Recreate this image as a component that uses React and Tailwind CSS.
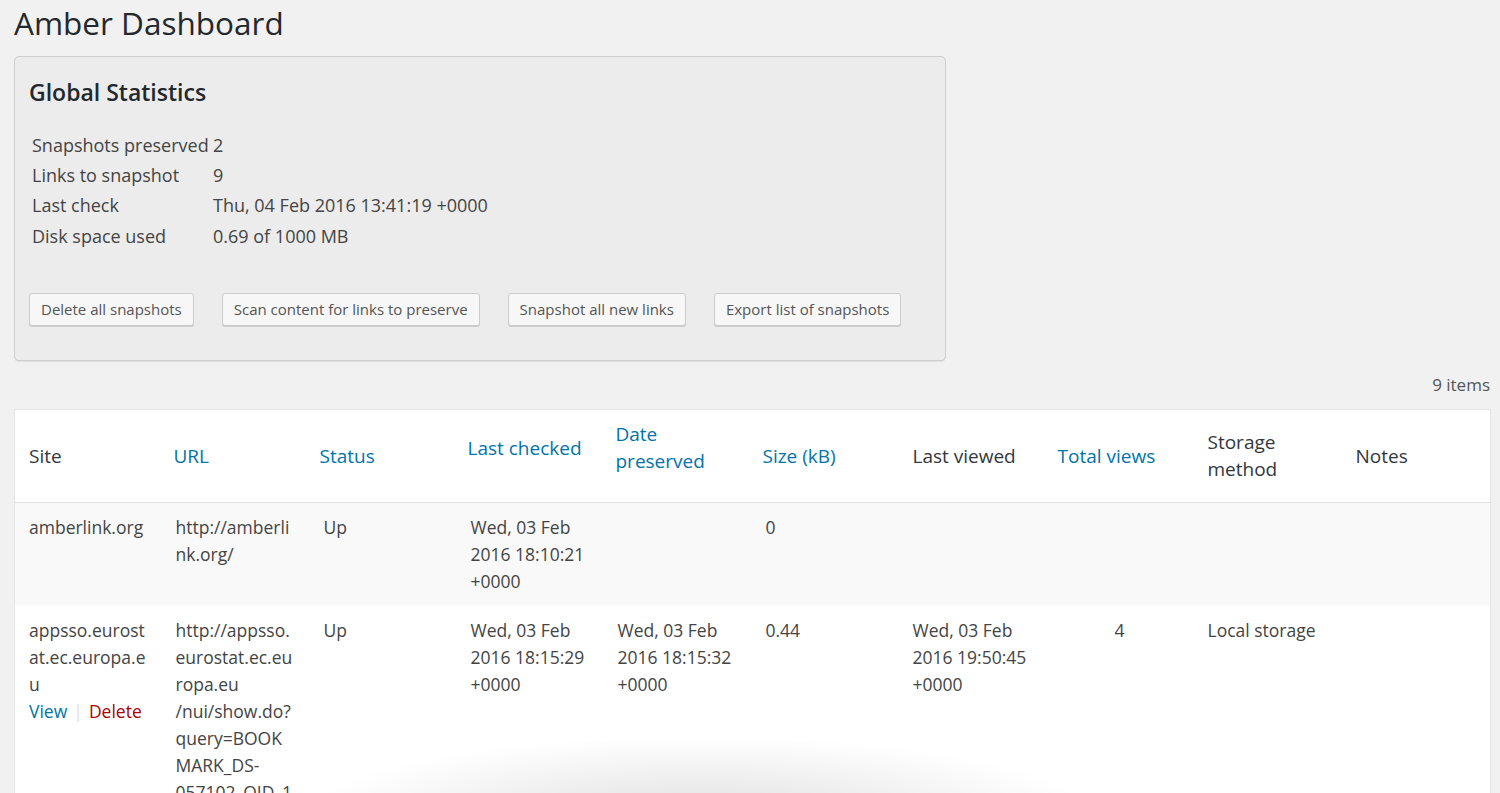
import React from 'react';

const stats = [
  ['Snapshots preserved', '2'],
  ['Links to snapshot', '9'],
  ['Last check', 'Thu, 04 Feb 2016 13:41:19 +0000'],
  ['Disk space used', '0.69 of 1000 MB'],
];

const buttons = [
  'Delete all snapshots',
  'Scan content for links to preserve',
  'Snapshot all new links',
  'Export list of snapshots',
];

const columns = [
  { label: 'Site', w: 'w-[145px]' },
  { label: 'URL', sortable: true, w: 'w-[146px]' },
  { label: 'Status', sortable: true, w: 'w-[148px]' },
  { label: 'Last checked', sortable: true, indicator: true, w: 'w-[148px]' },
  { label: 'Date preserved', sortable: true, indicator: true, w: 'w-[147px]' },
  { label: 'Size (kB)', sortable: true, w: 'w-[150px]' },
  { label: 'Last viewed', w: 'w-[145px]' },
  { label: 'Total views', sortable: true, w: 'w-[150px]' },
  { label: 'Storage method', w: 'w-[148px]' },
  { label: 'Notes', w: 'w-[149px]' },
];

function Cell({ children, className = 'pl-[14px]' }) {
  return <td className={`align-top pt-[11px] pb-[11px] pr-[12px] ${className}`}>{children}</td>;
}

export default function App() {
  return (
    <div
      className="min-h-screen bg-[#f1f1f1] text-[#444] relative overflow-hidden"
      style={{ fontFamily: '"Open Sans", "Liberation Sans", sans-serif' }}
    >
      <div className="pl-[14px] pr-[10px]">
        <h1 className="text-[31.5px] leading-[40px] pt-[3px] text-[#23282d] font-normal">Amber Dashboard</h1>

        <div className="mt-[13px] w-[932px] bg-[#ececec] border border-[#cfcfcf] rounded-[5px] shadow-[0_1px_1px_rgba(0,0,0,0.08)] pl-[14px] pt-[20px] pb-[34px]">
          <h2 className="text-[23px] leading-[31px] font-semibold text-[#23282d]">Global Statistics</h2>
          <table className="mt-[22px] ml-[3px] text-[18px] text-[#444]">
            <tbody>
              {stats.map(([k, v]) => (
                <tr key={k} className="h-[30.3px]">
                  <td className="w-[181px] align-middle">{k}</td>
                  <td className="align-middle">{v}</td>
                </tr>
              ))}
            </tbody>
          </table>
          <div className="mt-[42px] flex gap-[28px]">
            {buttons.map((b) => (
              <button
                key={b}
                className="h-[33px] px-[11px] text-[15px] text-[#555] bg-[#f7f7f7] border border-[#cccccc] rounded-[3px] shadow-[0_1px_0_#cccccc]"
              >
                {b}
              </button>
            ))}
          </div>
        </div>

        <div className="text-right text-[17px] leading-[24px] mt-[12px] text-[#555]">9 items</div>

        <table className="mt-[12px] w-[1476px] table-fixed bg-white border border-[#e5e5e5] shadow-[0_1px_1px_rgba(0,0,0,0.04)] text-[17.5px] leading-[27px] border-collapse">
          <colgroup>
            {columns.map((c) => (
              <col key={c.label} className={c.w} />
            ))}
          </colgroup>
          <thead>
            <tr className="border-b border-[#e1e1e1]">
              {columns.map((c) => (
                <th
                  key={c.label}
                  className={`text-left font-normal align-middle py-[11px] pl-[14px] pr-[12px] text-[19px] leading-[27px] ${
                    c.sortable ? 'text-[#0073aa]' : 'text-[#32373c]'
                  }`}
                >
                  <span className="block">{c.label}</span>
                  {c.indicator && <span className="block h-[16px]"></span>}
                </th>
              ))}
            </tr>
          </thead>
          <tbody>
            <tr className="bg-[#f9f9f9]">
              <Cell className="pl-[14px] break-words">amberlink.org</Cell>
              <Cell className="pl-[16px] break-words">http://amberlink.org/</Cell>
              <Cell className="pl-[18px]">Up</Cell>
              <Cell className="pl-[17px]">Wed, 03 Feb 2016 18:10:21 +0000</Cell>
              <Cell></Cell>
              <Cell className="pl-[17px]">0</Cell>
              <Cell></Cell>
              <Cell></Cell>
              <Cell></Cell>
              <Cell></Cell>
            </tr>
            <tr className="bg-white">
              <Cell className="pl-[14px] break-words">
                appsso.eurostat.ec.europa.eu
                <div>
                  <a className="text-[#0073aa]">View</a>
                  <span className="text-[#ddd] mx-[6px]">|</span>
                  <a className="text-[#a00]">Delete</a>
                </div>
              </Cell>
              <Cell className="pl-[16px] break-words">
                http://appsso.eurostat.ec.europa.eu<wbr />/nui/show.do?<wbr />query=BOOKMARK_DS-<wbr />057102_QID_1DC3D4A5_UID_-3F171EB0&amp;layout=TIME,C,X,0;GEO,L,Y,0
              </Cell>
              <Cell className="pl-[18px]">Up</Cell>
              <Cell className="pl-[17px]">Wed, 03 Feb 2016 18:15:29 +0000</Cell>
              <Cell className="pl-[16px]">Wed, 03 Feb 2016 18:15:32 +0000</Cell>
              <Cell className="pl-[17px]">0.44</Cell>
              <Cell>Wed, 03 Feb 2016 19:50:45 +0000</Cell>
              <Cell className="pl-[14px] text-center">4</Cell>
              <Cell>Local storage</Cell>
              <Cell></Cell>
            </tr>
          </tbody>
        </table>
      </div>

      <div className="pointer-events-none absolute left-[250px] top-[725px] w-[900px] h-[180px] bg-[radial-gradient(ellipse_at_center,rgba(0,0,0,0.12),rgba(0,0,0,0)_62%)]"></div>
    </div>
  );
}
